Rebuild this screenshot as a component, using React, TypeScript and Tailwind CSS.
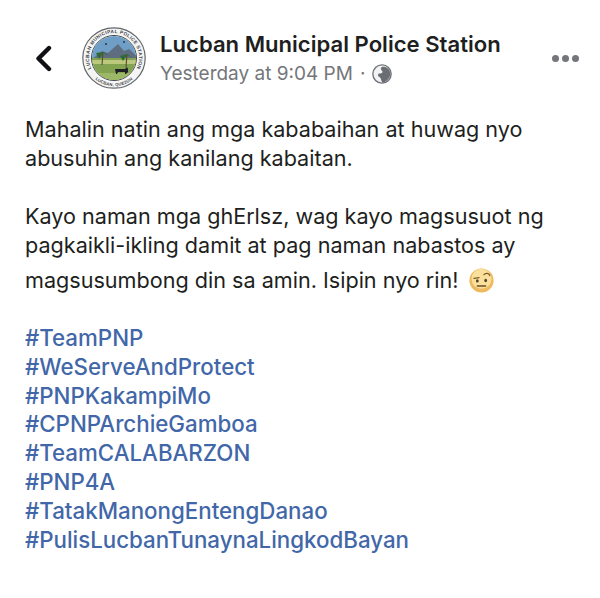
import React from 'react';

const hashtags = [
  '#TeamPNP',
  '#WeServeAndProtect',
  '#PNPKakampiMo',
  '#CPNPArchieGamboa',
  '#TeamCALABARZON',
  '#PNP4A',
  '#TatakManongEntengDanao',
  '#PulisLucbanTunaynaLingkodBayan',
];

const Seal = () => (
  <svg width="64" height="62" viewBox="0 0 64 62" className="shrink-0">
    <defs>
      <path id="sealTop" d="M11.5 45.3 A25 25 0 1 1 52.5 45.3" />
      <path id="sealBottom" d="M10 49 A29 29 0 0 0 54 49" />
      <clipPath id="sealInner">
        <circle cx="32" cy="31" r="22" />
      </clipPath>
    </defs>
    <ellipse cx="32" cy="31" rx="31.2" ry="30.2" fill="#f5f5f3" stroke="#62666d" strokeWidth="1.2" />
    <circle cx="32" cy="31" r="22.5" fill="#fff" stroke="#3f444c" strokeWidth="1" />
    <g clipPath="url(#sealInner)">
      <rect x="8" y="8" width="48" height="24" fill="#6f9fc6" />
      <path d="M9 33 L20 24 L26 26 L36 17 L42 24 L47 22 L56 30 V36 H9 Z" fill="#5e6e80" />
      <rect x="8" y="31" width="48" height="24" fill="#84a350" />
      <path d="M9 33 H55 V37 H9 Z" fill="#bcc97d" />
      <path d="M9 46 H55 V54 H9 Z" fill="#9cb765" />
      <path d="M20 38 L21 25 M44 40 L45 27" stroke="#5c4a30" strokeWidth="1.1" />
      <path d="M14 26 L21 25 L28 29 L21 26 L17 32 Z M38 29 L45 27 L51 31 L45 28 L41 34 Z" fill="#2f6a35" />
      <path d="M33 42 H43 L45 40 L46 42 V45 L44 47 H43 V45 H36 L35 47 H34 Z" fill="#1f2026" />
      <circle cx="24" cy="17" r="0.9" fill="#1f2a38" />
      <circle cx="42" cy="15" r="0.9" fill="#1f2a38" />
    </g>
    <text fontFamily="'Liberation Sans', sans-serif" fontSize="4.8" fontWeight="700" fill="#3d424a" letterSpacing="0.35">
      <textPath href="#sealTop" startOffset="50%" textAnchor="middle">LUCBAN MUNICIPAL POLICE STATION</textPath>
    </text>
    <text fontFamily="'Liberation Sans', sans-serif" fontSize="4.2" fontWeight="700" fill="#3d424a" letterSpacing="0.2">
      <textPath href="#sealBottom" startOffset="50%" textAnchor="middle">LUCBAN, QUEZON</textPath>
    </text>
  </svg>
);

const Globe = () => (
  <svg width="20" height="20" viewBox="0 0 19 19" className="shrink-0">
    <circle cx="9.5" cy="9.5" r="8.7" fill="#f2f2f3" stroke="#6f7278" strokeWidth="1.3" />
    <path d="M9 3 C12 1.5 17 4 17.6 9 C17.5 13 14 17 10 17.6 C8.5 16 9 14 7.5 12.5 C5.5 12 5 10 6.5 9 C9 9.5 11 8 9.5 6.5 C8.5 5.5 8 4 9 3 Z" fill="#6a6d73" />
  </svg>
);

const Emoji = () => (
  <svg width="25" height="25" viewBox="0 0 30 30" className="shrink-0">
    <circle cx="15" cy="15" r="14.5" fill="#eeb95f" />
    <circle cx="15" cy="13" r="12" fill="#fae09a" />
    <path d="M6 12.5 L12 11.5 M18 8 C20 5.5 24 6 25 9" stroke="#7a5a2c" strokeWidth="1.6" fill="none" strokeLinecap="round" />
    <ellipse cx="10" cy="15.5" rx="1.7" ry="1.9" fill="#54432f" />
    <ellipse cx="20" cy="15" rx="1.7" ry="2" fill="#54432f" />
    <path d="M10 21.5 H20" stroke="#6a4c28" strokeWidth="1.7" strokeLinecap="round" />
  </svg>
);

const App: React.FC = () => {
  return (
    <div className="h-[598px] w-[600px] overflow-hidden bg-white font-['Inter',sans-serif] text-[#1e1f21]">
      <header className="flex items-center pl-[35px] pr-[21px] pt-[27px]">
        <svg width="17" height="27" viewBox="0 0 17 27" className="shrink-0">
          <path d="M14 3 L3.5 13.5 L14 24" fill="none" stroke="#101114" strokeWidth="4.4" strokeLinecap="round" strokeLinejoin="round" />
        </svg>
        <div className="ml-[30px]">
          <Seal />
        </div>
        <div className="ml-[14px] flex-1">
          <h1 className="text-[22.1px] leading-[31px] font-semibold">Lucban Municipal Police Station</h1>
          <div className="flex items-center gap-[7px] text-[19px] leading-[28px] text-[#74767a]">
            <span>Yesterday at 9:04 PM</span>
            <span>·</span>
            <Globe />
          </div>
        </div>
        <div className="flex gap-[3px] self-start pt-[28px]">
          <span className="h-[7px] w-[7px] rounded-full bg-[#74767b]"></span>
          <span className="h-[7px] w-[7px] rounded-full bg-[#74767b]"></span>
          <span className="h-[7px] w-[7px] rounded-full bg-[#74767b]"></span>
        </div>
      </header>

      <main className="mt-[26px] px-[25px] text-[21.6px] leading-[29px]">
        <p>
          Mahalin natin ang mga kababaihan at huwag nyo
          <br />
          abusuhin ang kanilang kabaitan.
        </p>
        <p className="mt-[29px]">
          Kayo naman mga ghErlsz, wag kayo magsusuot ng
          <br />
          pagkaikli-ikling damit at pag naman nabastos ay
        </p>
        <p className="mt-[6px] flex items-center gap-[10px]">
          magsusumbong din sa amin. Isipin nyo rin!
          <Emoji />
        </p>
        <ul className="mt-[29px] text-[22.3px] leading-[28.8px] font-medium text-[#4267a9]">
          {hashtags.map((tag) => (
            <li key={tag}>{tag}</li>
          ))}
        </ul>
      </main>
    </div>
  );
};

export default App;
